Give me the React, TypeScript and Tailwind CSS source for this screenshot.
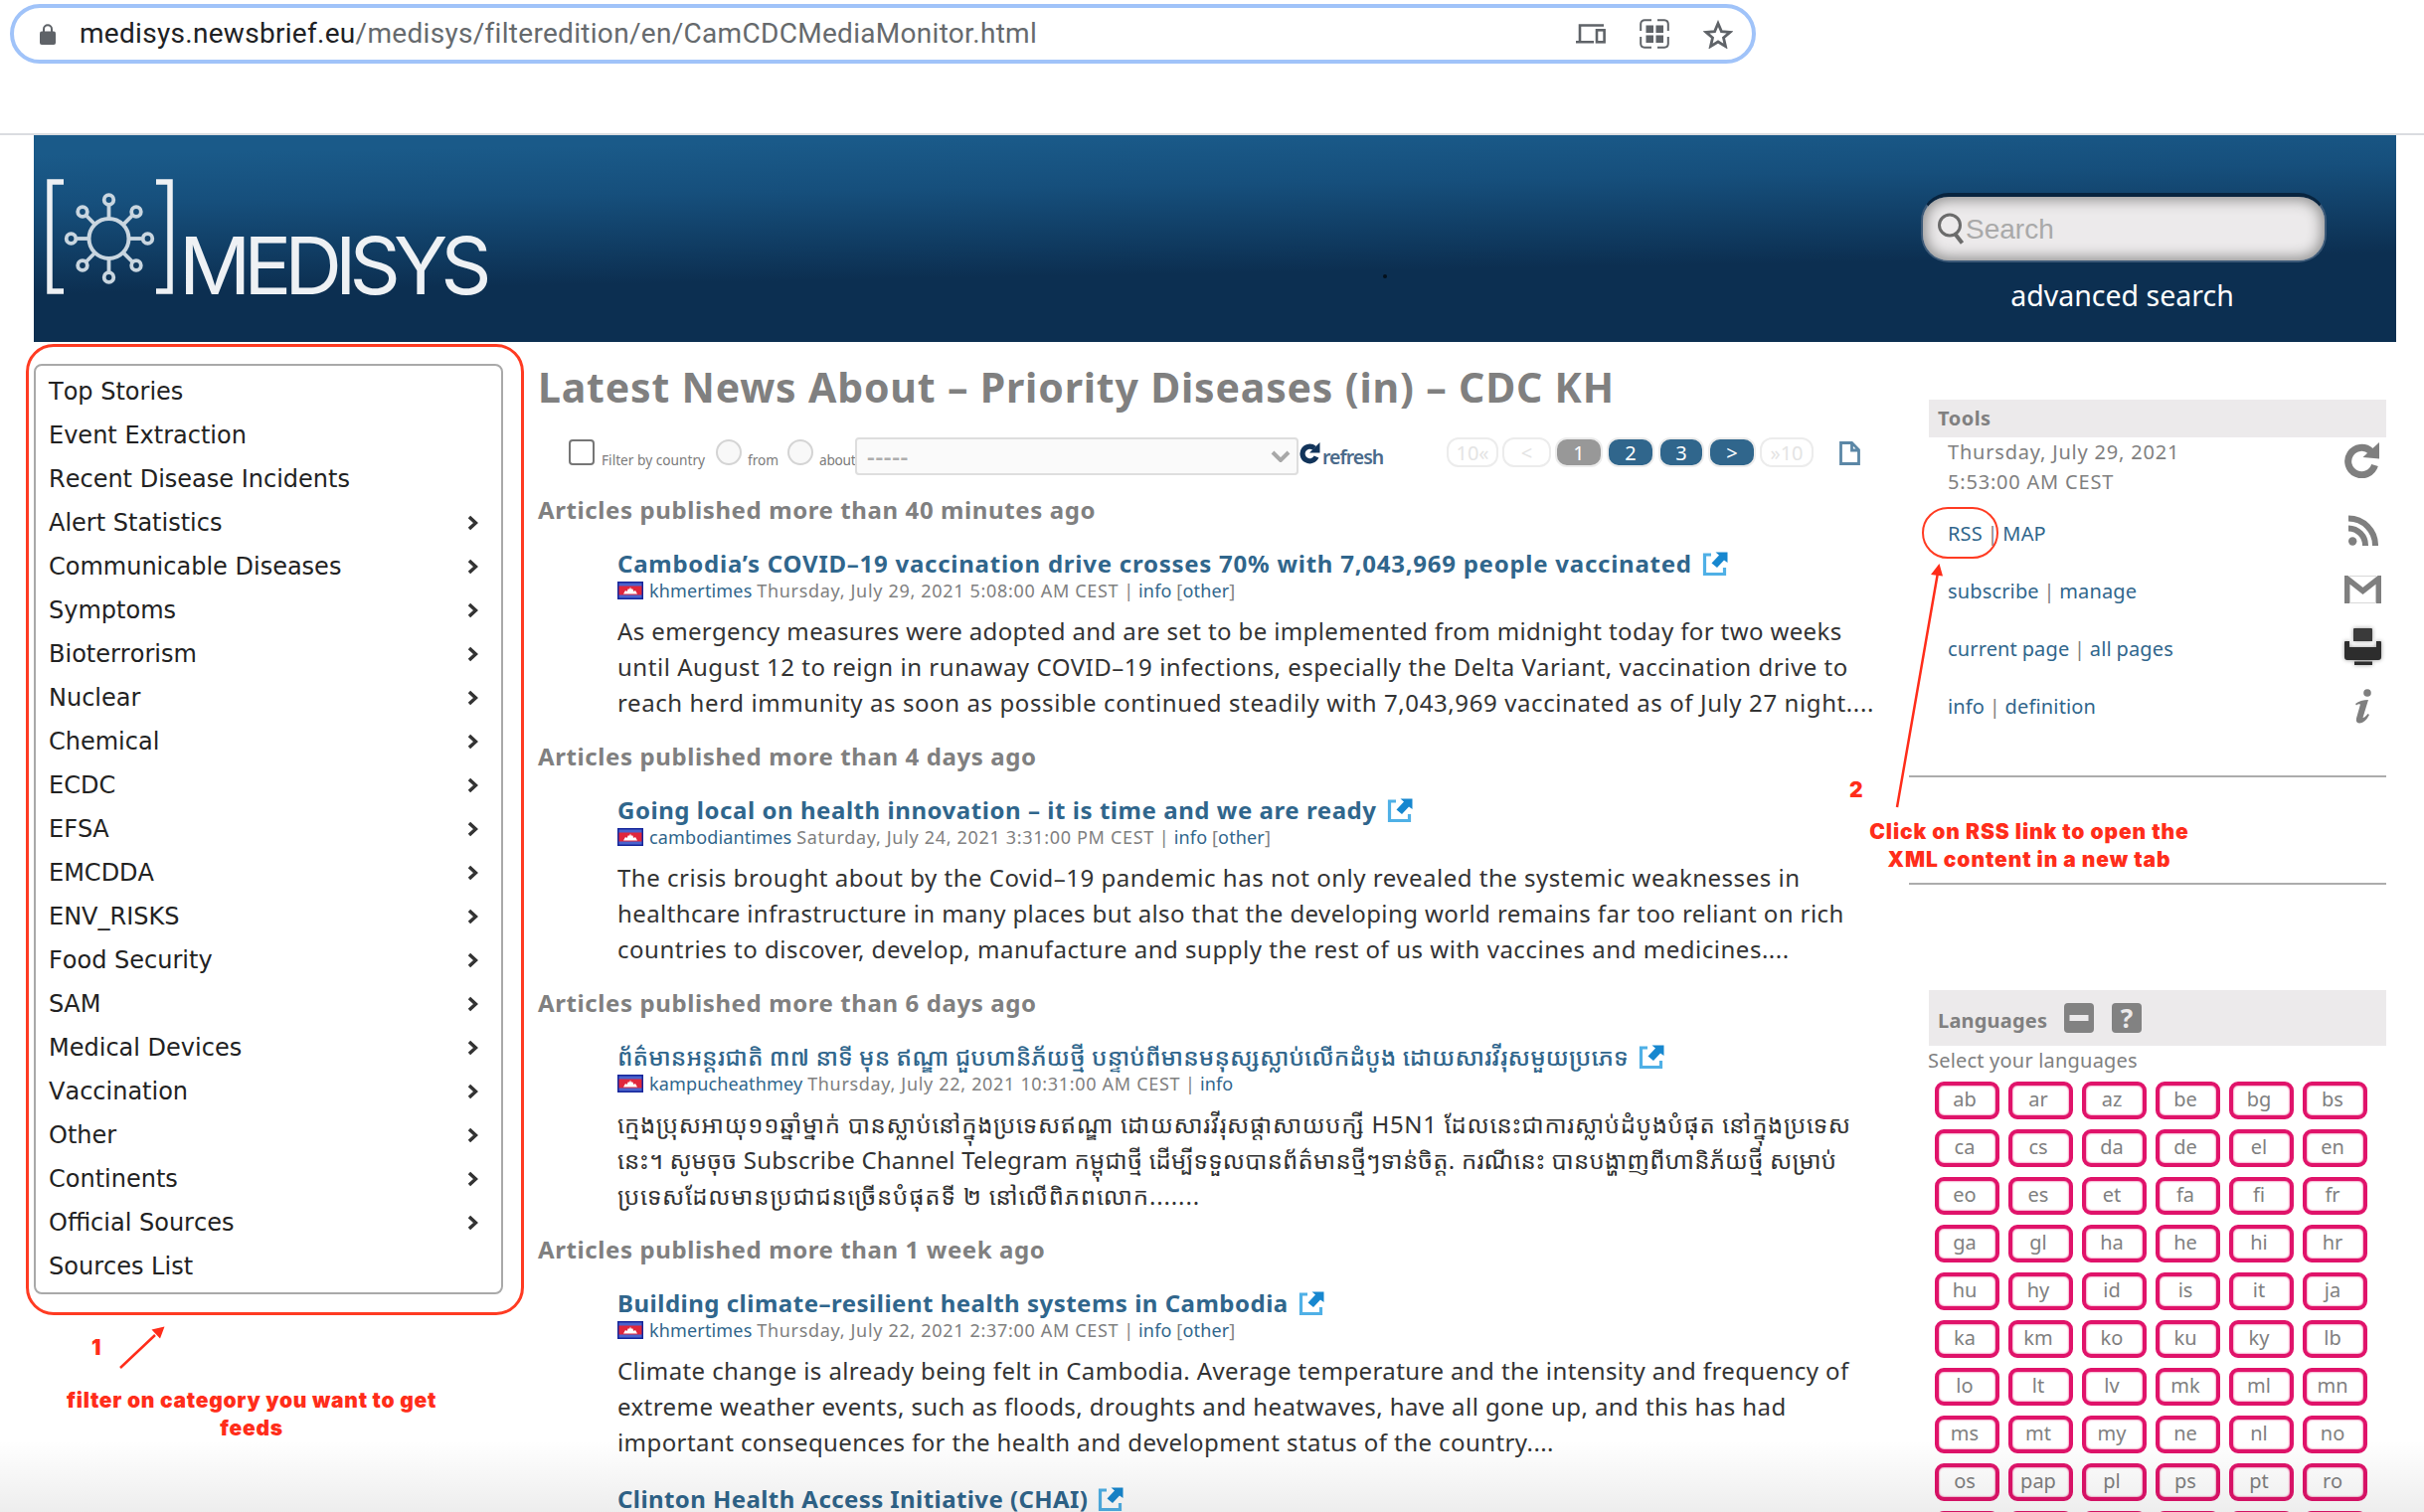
import React from "react";

const categories: [string, boolean][] = [
  ["Top Stories", false],
  ["Event Extraction", false],
  ["Recent Disease Incidents", false],
  ["Alert Statistics", true],
  ["Communicable Diseases", true],
  ["Symptoms", true],
  ["Bioterrorism", true],
  ["Nuclear", true],
  ["Chemical", true],
  ["ECDC", true],
  ["EFSA", true],
  ["EMCDDA", true],
  ["ENV_RISKS", true],
  ["Food Security", true],
  ["SAM", true],
  ["Medical Devices", true],
  ["Vaccination", true],
  ["Other", true],
  ["Continents", true],
  ["Official Sources", true],
  ["Sources List", false],
];

const languages =
  "ab ar az be bg bs ca cs da de el en eo es et fa fi fr ga gl ha he hi hr hu hy id is it ja ka km ko ku ky lb lo lt lv mk ml mn ms mt my ne nl no os pap pl ps pt ro".split(" ");

type Article = {
  title: string;
  titleClass: string;
  source?: string;
  date?: string;
  other?: boolean;
  lines: [text: string, tracking: string][];
};

const groups: { heading: string; articles: Article[] }[] = [
  {
    heading: "Articles published more than 40 minutes ago",
    articles: [
      {
        title: "Cambodia’s COVID–19 vaccination drive crosses 70% with 7,043,969 people vaccinated",
        titleClass: "font-bold tracking-[0.75px]",
        source: "khmertimes",
        date: "Thursday, July 29, 2021 5:08:00 AM CEST",
        other: true,
        lines: [
          ["As emergency measures were adopted and are set to be implemented from midnight today for two weeks", "tracking-[0.38px]"],
          ["until August 12 to reign in runaway COVID–19 infections, especially the Delta Variant, vaccination drive to", "tracking-[0.53px]"],
          ["reach herd immunity as soon as possible continued steadily with 7,043,969 vaccinated as of July 27 night....", "tracking-[0.6px]"],
        ],
      },
    ],
  },
  {
    heading: "Articles published more than 4 days ago",
    articles: [
      {
        title: "Going local on health innovation – it is time and we are ready",
        titleClass: "font-bold tracking-[0.55px]",
        source: "cambodiantimes",
        date: "Saturday, July 24, 2021 3:31:00 PM CEST",
        other: true,
        lines: [
          ["The crisis brought about by the Covid–19 pandemic has not only revealed the systemic weaknesses in", "tracking-[0.51px]"],
          ["healthcare infrastructure in many places but also that the developing world remains far too reliant on rich", "tracking-[0.41px]"],
          ["countries to discover, develop, manufacture and supply the rest of us with vaccines and medicines....", "tracking-[0.52px]"],
        ],
      },
    ],
  },
  {
    heading: "Articles published more than 6 days ago",
    articles: [
      {
        title:
          "ព័ត៌មានអន្តរជាតិ ៣៧ នាទី មុន ឥណ្ឌា ជួបហានិភ័យថ្មី បន្ទាប់ពីមានមនុស្សស្លាប់លើកដំបូង ដោយសារវីរុសមួយប្រភេទ",
        titleClass: "font-medium tracking-[0.07px]",
        source: "kampucheathmey",
        date: "Thursday, July 22, 2021 10:31:00 AM CEST",
        lines: [
          [
            "ក្មេងប្រុសអាយុ១១ឆ្នាំម្នាក់ បានស្លាប់នៅក្នុងប្រទេសឥណ្ឌា ដោយសារវីរុសផ្តាសាយបក្សី H5N1 ដែលនេះជាការស្លាប់ដំបូងបំផុត នៅក្នុងប្រទេស",
            "tracking-[0.7px]",
          ],
          [
            "នេះ។ សូមចុច Subscribe Channel Telegram កម្ពុជាថ្មី ដើម្បីទទួលបានព័ត៌មានថ្មីៗទាន់ចិត្ត. ករណីនេះ បានបង្ហាញពីហានិភ័យថ្មី សម្រាប់",
            "tracking-[0.22px]",
          ],
          ["ប្រទេសដែលមានប្រជាជនច្រើនបំផុតទី ២ នៅលើពិភពលោក.......", "tracking-[0.85px]"],
        ],
      },
    ],
  },
  {
    heading: "Articles published more than 1 week ago",
    articles: [
      {
        title: "Building climate–resilient health systems in Cambodia",
        titleClass: "font-bold tracking-[0.5px]",
        source: "khmertimes",
        date: "Thursday, July 22, 2021 2:37:00 AM CEST",
        other: true,
        lines: [
          ["Climate change is already being felt in Cambodia. Average temperature and the intensity and frequency of", "tracking-[0.41px]"],
          ["extreme weather events, such as floods, droughts and heatwaves, have all gone up, and this has had", "tracking-[0.43px]"],
          ["important consequences for the health and development status of the country....", "tracking-[0.42px]"],
        ],
      },
      {
        title: "Clinton Health Access Initiative (CHAI)",
        titleClass: "font-bold tracking-[0.42px]",
        lines: [],
      },
    ],
  },
];

function AddressBar() {
  return (
    <div className="h-[136px] border-b-2 border-[#dadce0] pt-1 pl-[10px]">
      <div className="flex h-[60px] w-[1756px] items-center rounded-full border-4 border-[#a0c3f9] pr-[19px] pl-[26px]">
        <svg viewBox="0 0 16 21" className="h-[21px] w-4 text-[#5f6368]">
          <path d="M4 9V5.2a4 4 0 0 1 8 0V9" fill="none" stroke="currentColor" strokeWidth="2" />
          <rect y="7.5" width="16" height="13.5" rx="2" fill="currentColor" />
        </svg>
        <p className="ml-6 font-[Roboto] text-[28px] tracking-[0.3px] whitespace-nowrap text-[#666a6d]">
          <span className="text-[#202124]">medisys.newsbrief.eu</span>/medisys/filteredition/en/CamCDCMediaMonitor.html
        </p>
        <div className="ml-auto flex items-center gap-[34px] text-[#5f6368]">
          <svg viewBox="0 0 30 20" className="h-5 w-[30px]" fill="none" stroke="currentColor" strokeWidth="2.6">
            <path d="M28 1.5H4V17M0 18.2h18" />
            <rect x="21" y="6.3" width="7.6" height="12" />
          </svg>
          <svg viewBox="0 0 30 30" className="h-[30px] w-[30px]">
            <path
              d="M1.2 12V5a4 4 0 0 1 4-3.8H12M18 1.2h7a4 4 0 0 1 3.8 3.8v7M28.8 18v7a4 4 0 0 1-3.8 3.8h-7M12 28.8H5a4 4 0 0 1-3.8-3.8v-7"
              fill="none"
              stroke="currentColor"
              strokeWidth="2"
            />
            <path d="M6.5 6.5h7.5v7.5H6.5zM16.5 6.5H24v7.5h-7.5zM6.5 16.5h7.5V24H6.5zM16.5 16.5H24V24h-7.5z" fill="currentColor" />
          </svg>
          <svg viewBox="0 0 30 29" className="h-[29px] w-[30px]">
            <path
              d="M15 3.5l3.4 8.1 8.7.7-6.6 5.7 2 8.6L15 22l-7.5 4.6 2-8.6L2.9 12.3l8.7-.7z"
              fill="none"
              stroke="currentColor"
              strokeWidth="2.8"
            />
          </svg>
        </div>
      </div>
    </div>
  );
}

function Logo() {
  const nodes = [
    [62.5, 21], [62.5, 99], [24.5, 60], [101.5, 60],
    [36, 33], [90, 33], [36, 87], [90, 87],
  ];
  return (
    <div className="flex w-[470px] shrink-0 pt-11 pl-[13px] text-[#eef1f4]">
      <svg viewBox="0 0 127 116" className="h-[116px] w-[127px] shrink-0" fill="none" stroke="currentColor">
        <path d="M17 3H3v110h14M110 3h14v110h-14" strokeWidth="5.5" />
        <circle cx="62.5" cy="60" r="20" strokeWidth="4" className="text-[#c9d6e0]" />
        {nodes.map(([x, y]) => {
          const dx = x - 62.5;
          const dy = y - 60;
          const d = Math.hypot(dx, dy);
          return (
            <g key={`${x}-${y}`} strokeWidth="3.8" className="text-[#c9d6e0]">
              <circle cx={x} cy={y} r="4.8" />
              <path d={`M${62.5 + (dx / d) * 21} ${60 + (dy / d) * 21}L${x - (dx / d) * 6} ${y - (dy / d) * 6}`} />
            </g>
          );
        })}
      </svg>
      <span className="mt-[39px] ml-[6px] font-[Inter] text-[80px] leading-[96px] font-[400] tracking-[-7px]">MEDISYS</span>
    </div>
  );
}

function Header() {
  return (
    <header className="ml-[34px] flex h-[208px] w-[2376px] bg-[linear-gradient(179deg,#1a5a89_8%,#164f7c_28%,#0c2f51_64%,#0c2f51)]">
      <Logo />
      <span className="mt-[140px] ml-[887px] h-[4px] w-[4px] rounded-full bg-[#04101c]" />
      <div className="mt-[58px] mr-[70px] ml-auto w-[408px]">
        <div className="flex h-[70px] items-center rounded-[28px] border-2 border-t-4 border-[#3d5a78] border-t-[#08243f] bg-[#eceaeb] pl-[15px] shadow-[inset_0_0_14px_3px_#8e8e8e]">
          <svg viewBox="0 0 27 32" className="h-8 w-[27px] text-[#6b6b6b]" fill="none" stroke="currentColor">
            <circle cx="12" cy="12.5" r="10.5" strokeWidth="3" />
            <path d="M17.5 21.5l7 9" strokeWidth="4" />
          </svg>
          <span className="mt-0.5 ml-px font-['Liberation_Sans'] text-[28px] text-[#a9a9a9]">Search</span>
        </div>
        <a className="mt-[13px] block pr-[3px] text-center text-[28.5px] leading-[40px] text-white">advanced search</a>
      </div>
    </header>
  );
}

function Sidebar() {
  return (
    <nav className="mt-[22px] ml-[34px] h-[936px] w-[472px] shrink-0 rounded-lg border-2 border-[#a9a9a9] pt-1 pr-[23px] pl-[13px] font-['DejaVu_Sans'] text-2xl text-[#222] [font-kerning:none]">
      {categories.map(([name, expandable]) => (
        <a key={name} className="flex h-11 items-center justify-between">
          {name}
          {expandable && (
            <svg viewBox="0 0 10 16" className="h-4 w-[10px]" fill="none" stroke="#333" strokeWidth="3.4">
              <path d="M1 2l6.5 6L1 14" />
            </svg>
          )}
        </a>
      ))}
    </nav>
  );
}

function ExternalIcon() {
  return (
    <svg viewBox="0 0 26 26" className="h-[26px] w-[26px]" fill="none">
      <path d="M9 4H2.5v19.5h20V17" stroke="#4fb0e6" strokeWidth="3.2" />
      <path d="M13.5 1.5H25.5V12l-3.5-2.5-7 7.500-5.500-4.500L17 4.500z" fill="#1787cf" />
    </svg>
  );
}

function Flag() {
  return (
    <svg viewBox="0 0 26 18" className="h-[18px] w-[26px]">
      <rect width="26" height="18" fill="#4a62cc" />
      <rect x="1" y="4.5" width="24" height="9" fill="#e0263c" />
      <path d="M6 12.5l2-3.5 1.5 1 1.5-3 1 1 1-2.5 1 2.5 1-1 1.5 3 1.5-1 2 3.5z" fill="#fff" />
      <rect x="0.75" y="0.75" width="24.5" height="16.5" fill="none" stroke="#14259a" strokeWidth="1.5" />
    </svg>
  );
}

function ArticleView({ article }: { article: Article }) {
  return (
    <article className="pt-[23px] pl-20">
      <h3 className="flex h-[31px] items-center gap-[10px] text-2xl leading-8 text-[#30668c]">
        <span className={article.titleClass}>{article.title}</span>
        <ExternalIcon />
      </h3>
      {article.source && (
        <p className="flex h-6 items-center text-[18px] leading-[26px] tracking-[0.15px] text-[#808080]">
          <Flag />
          <span className="ml-[6px]">
            <a className="text-[#30668c]">{article.source}</a> <span className="tracking-[0.68px]">{article.date}</span> |{" "}
            <a className="text-[#30668c]">info</a>
            {article.other && (
              <>
                {" "}[<a className="text-[#30668c]">other</a>]
              </>
            )}
          </span>
        </p>
      )}
      <div className="mt-[11px] text-2xl leading-9 text-[#333]">
        {article.lines.map(([text, tracking]) => (
          <p key={text} className={tracking}>
            {text}
          </p>
        ))}
      </div>
    </article>
  );
}

function Filters() {
  const pill = "h-[30px] rounded-xl border-2 border-[#ececec] text-center leading-[27px]";
  return (
    <div className="flex h-[37px] text-[13.7px] leading-5 text-[#7b7b7b]">
      <span className="mt-[2px] ml-[31px] h-[26px] w-[26px] rounded border-2 border-[#767676]" />
      <span className="mt-[13px] ml-[7px] w-[105px]">Filter by country</span>
      <span className="mt-[2px] ml-[10px] h-[26px] w-[26px] rounded-full border-2 border-[#d4d4d4] bg-[#f8f8f8]" />
      <span className="mt-[13px] ml-[6px] w-[30px]">from</span>
      <span className="mt-[2px] ml-[10px] h-[26px] w-[26px] rounded-full border-2 border-[#d4d4d4] bg-[#f8f8f8]" />
      <span className="mt-[13px] ml-[6px] w-[36px] tracking-[-0.3px]">about</span>
      <div className="flex h-[38px] w-[446px] items-center justify-between rounded border-2 border-[#dedede] bg-[#fafafa] pr-[6px] pl-[10px] text-[24px] font-semibold tracking-[0.7px] text-[#adadad]">
        -----
        <svg viewBox="0 0 20 12" className="h-3 w-5" fill="none" stroke="#a8a8a8" strokeWidth="4">
          <path d="M2 2l8 8 8-8" />
        </svg>
      </div>
      <svg viewBox="0 0 22 22" className="mt-[5px] h-[22px] w-[22px]">
        <path d="M16 5.8A7.3 7.3 0 1 0 18 14.5" fill="none" stroke="#12345a" strokeWidth="5.2" />
        <path d="M21.5 0V10.5H11z" fill="#12345a" />
      </svg>
      <span className="mt-[8px] ml-[2px] w-[62px] text-[19.5px] leading-6 font-semibold tracking-[-1px] text-[#4a6a8a]">refresh</span>
      <div className="ml-[63px] flex gap-1 text-[20px] text-white">
        <span className={pill + " w-[52px] text-[#e4e4e4]"}>10«</span>
        <span className={pill + " w-[49px] text-[#e4e4e4]"}>&lt;</span>
        <span className={pill + " w-[48px] bg-[#989898]"}>1</span>
        <span className={pill + " w-[48px] bg-[#30668c]"}>2</span>
        <span className={pill + " w-[46px] bg-[#30668c]"}>3</span>
        <span className={pill + " w-[48px] bg-[#30668c]"}>&gt;</span>
        <span className={pill + " w-[54px] text-[#e4e4e4]"}>»10</span>
      </div>
      <svg viewBox="0 0 21 24" className="mt-[4px] ml-[26px] h-6 w-[21px]" fill="none" stroke="#5b87a6" strokeWidth="2.8">
        <path d="M1.5 1.5h11l7 7v14h-18zM12.5 1.5v7.500h7" />
      </svg>
    </div>
  );
}

function Main() {
  return (
    <main className="mt-[17px] ml-[35px] w-[1379px] shrink-0 whitespace-nowrap">
      <h1 className="mb-[23px] text-[41px] leading-[56px] font-bold tracking-[0.82px] text-[#808080]">
        Latest News About – Priority Diseases (in) – CDC KH
      </h1>
      <Filters />
      {groups.map((group) => (
        <section key={group.heading} className="mt-[19px]">
          <h2 className="h-8 text-2xl leading-[34px] font-bold tracking-[0.6px] text-[#808080]">{group.heading}</h2>
          {group.articles.map((article) => (
            <ArticleView key={article.title} article={article} />
          ))}
        </section>
      ))}
    </main>
  );
}

function ToolRow({ links, icon }: { links: [string, string]; icon: React.ReactNode }) {
  return (
    <div className="flex h-[58px] items-center">
      <p className="pt-0.5 tracking-[0.15px] text-[#808080] [word-spacing:-0.7px]">
        <a className="text-[#30668c]">{links[0]}</a> | <a className="text-[#30668c]">{links[1]}</a>
      </p>
      <span className="ml-auto flex w-[47px] justify-center">{icon}</span>
    </div>
  );
}

function Tools() {
  return (
    <section className="border-b-2 border-[#acacac] pb-[41px] pl-5">
      <h2 className="h-[38px] bg-[#eceaeb] pl-[9px] leading-[37px] font-bold tracking-[0.5px] text-[#808080]">Tools</h2>
      <div className="pl-[19px]">
        <div className="mb-[7px] flex tracking-[0.8px] text-[#808080]">
          <p>
            Thursday, July 29, 2021
            <br />
            5:53:00 AM CEST
          </p>
          <svg viewBox="0 0 36 36" className="mt-[5px] mr-[6px] ml-auto h-9 w-9">
            <path d="M26.500 8.800A13.700 13.700 0 1 0 30.500 23" fill="none" stroke="#7f7f7f" strokeWidth="7" />
            <path d="M35 0v16.500L18.500 15z" fill="#7f7f7f" />
          </svg>
        </div>
        <ToolRow
          links={["RSS", "MAP"]}
          icon={
            <svg viewBox="0 0 30 31" className="mb-[5px] h-[31px] w-[30px]" fill="none" stroke="#7f7f7f" strokeWidth="6">
              <circle cx="4.2" cy="26.5" r="4.2" fill="#7f7f7f" stroke="none" />
              <path d="M0 13.5a17 17 0 0 1 17 17.500M0 3.500a27 27 0 0 1 27 27.500" />
            </svg>
          }
        />
        <ToolRow
          links={["subscribe", "manage"]}
          icon={
            <svg viewBox="0 0 37 28" className="mb-[2px] h-7 w-[37px]" fill="none" stroke="#7f7f7f" strokeWidth="5.5">
              <path d="M2.700 28V3l15.800 12.500L34.300 3v25" />
              <path d="M5 .5h27M5 27.500h27" stroke="#d8d8d8" strokeWidth="1" />
            </svg>
          }
        />
        <ToolRow
          links={["current page", "all pages"]}
          icon={
            <svg viewBox="0 0 43 43" className="mb-[5px] h-[43px] w-[43px] drop-shadow-[0_0_2px_#999]">
              <path d="M13 4h17q1 0 1 1v12H12V5q0-1 1-1z" fill="#3a3a3a" />
              <path d="M4 17h4v6h27v-6h4q1 0 1 1v15q0 3-3 3H6q-3 0-3-3V18q0-1 1-1z" fill="#2d2d2d" />
              <path d="M13 37.500h18V41H13z" fill="#2d2d2d" />
            </svg>
          }
        />
        <ToolRow
          links={["info", "definition"]}
          icon={
            <svg viewBox="0 0 18 35" className="h-[35px] w-[18px]">
              <circle cx="13" cy="4" r="3.8" fill="#7f7f7f" />
              <path d="M1 15q5-4 13-4L8.500 29q2 0 5-4l1.500 1q-4 8-9.500 8.500Q1 34.500 2 29.500L6 15.500q-2-1-4 1z" fill="#7f7f7f" />
            </svg>
          }
        />
      </div>
    </section>
  );
}

function Languages() {
  return (
    <section className="mt-[106px] pl-5 text-[#808080]">
      <h2 className="flex h-14 items-center bg-[#eceaeb] pl-[9px] font-bold">
        <span className="w-[127px] pt-[5px] tracking-[0.2px]">Languages</span>
        <svg viewBox="0 0 30 30" className="h-[30px] w-[30px]">
          <rect width="30" height="30" rx="4" fill="#828282" />
          <rect x="5.5" y="12" width="19" height="6" fill="#eceaeb" />
        </svg>
        <span className="ml-[18px] flex h-[30px] w-[30px] items-center justify-center rounded bg-[#828282] text-[26px] text-[#eceaeb]">?</span>
      </h2>
      <p className="-ml-px leading-[29px] tracking-[0.2px]">Select your languages</p>
      <div className="mt-[7px] ml-[6px] grid w-max grid-cols-[repeat(6,65px)] gap-x-[9px] gap-y-[10px]">
        {languages.map((code) => (
          <span
            key={code}
            className="h-[38px] rounded-[9px] border-4 border-[#e0136a] pr-[5px] text-center leading-[27px] shadow-[inset_0_0_2px_#e0136a]"
          >
            {code}
          </span>
        ))}
        {[0, 1, 2, 3, 4, 5].map((column) => (
          <span key={column} className="h-[38px] rounded-[9px] border-4 border-[#e0136a]" />
        ))}
      </div>
    </section>
  );
}

function Annotations() {
  return (
    <div className="pointer-events-none absolute inset-0 text-center font-[Inter] text-[21px] leading-7 font-black text-[#ff2d1a]">
      <div className="absolute top-[346px] left-[26px] h-[977px] w-[501px] rounded-[28px] border-[3px] border-[#ff3b22]" />
      <div className="absolute top-[510px] left-[1933px] h-[52px] w-[77px] rounded-full border-[2.5px] border-[#ff3b22]" />
      <span className="absolute top-[1342px] left-[92px]">1</span>
      <span className="absolute top-[781px] left-[1860px]">2</span>
      <p className="absolute top-[1395px] left-[53px] w-[400px] tracking-[0.7px]">
        filter on category you want to get
        <br />
        feeds
      </p>
      <p className="absolute top-[823px] left-[1871px] w-[340px] tracking-[0.9px]">
        Click on RSS link to open the
        <br />
        XML content in a new tab
      </p>
      <svg viewBox="0 0 2438 1521" className="absolute inset-0 h-full w-full" stroke="#ff2d1a" strokeWidth="2.5" fill="#ff2d1a">
        <path d="M121 1376L156 1343M1908 812L1949 576" />
        <path d="M165.500 1334.500l-4.500 12-8.500-9zM1950.500 567l3.500 12.500-12-1.500z" stroke="none" />
      </svg>
    </div>
  );
}

export default function App() {
  return (
    <div className="relative h-[1521px] w-[2438px] overflow-hidden bg-white font-['Noto_Sans','Noto_Sans_Khmer',sans-serif]">
      <AddressBar />
      <Header />
      <div className="flex">
        <Sidebar />
        <Main />
        <aside className="w-[480px] shrink-0 pt-[58px] text-[20px] leading-[30px] whitespace-nowrap">
          <Tools />
          <div className="h-[108px] border-b-2 border-[#acacac]" />
          <Languages />
        </aside>
      </div>
      <Annotations />
      <div className="absolute inset-x-0 bottom-0 h-[72px] bg-linear-to-b from-transparent to-black/7" />
    </div>
  );
}
